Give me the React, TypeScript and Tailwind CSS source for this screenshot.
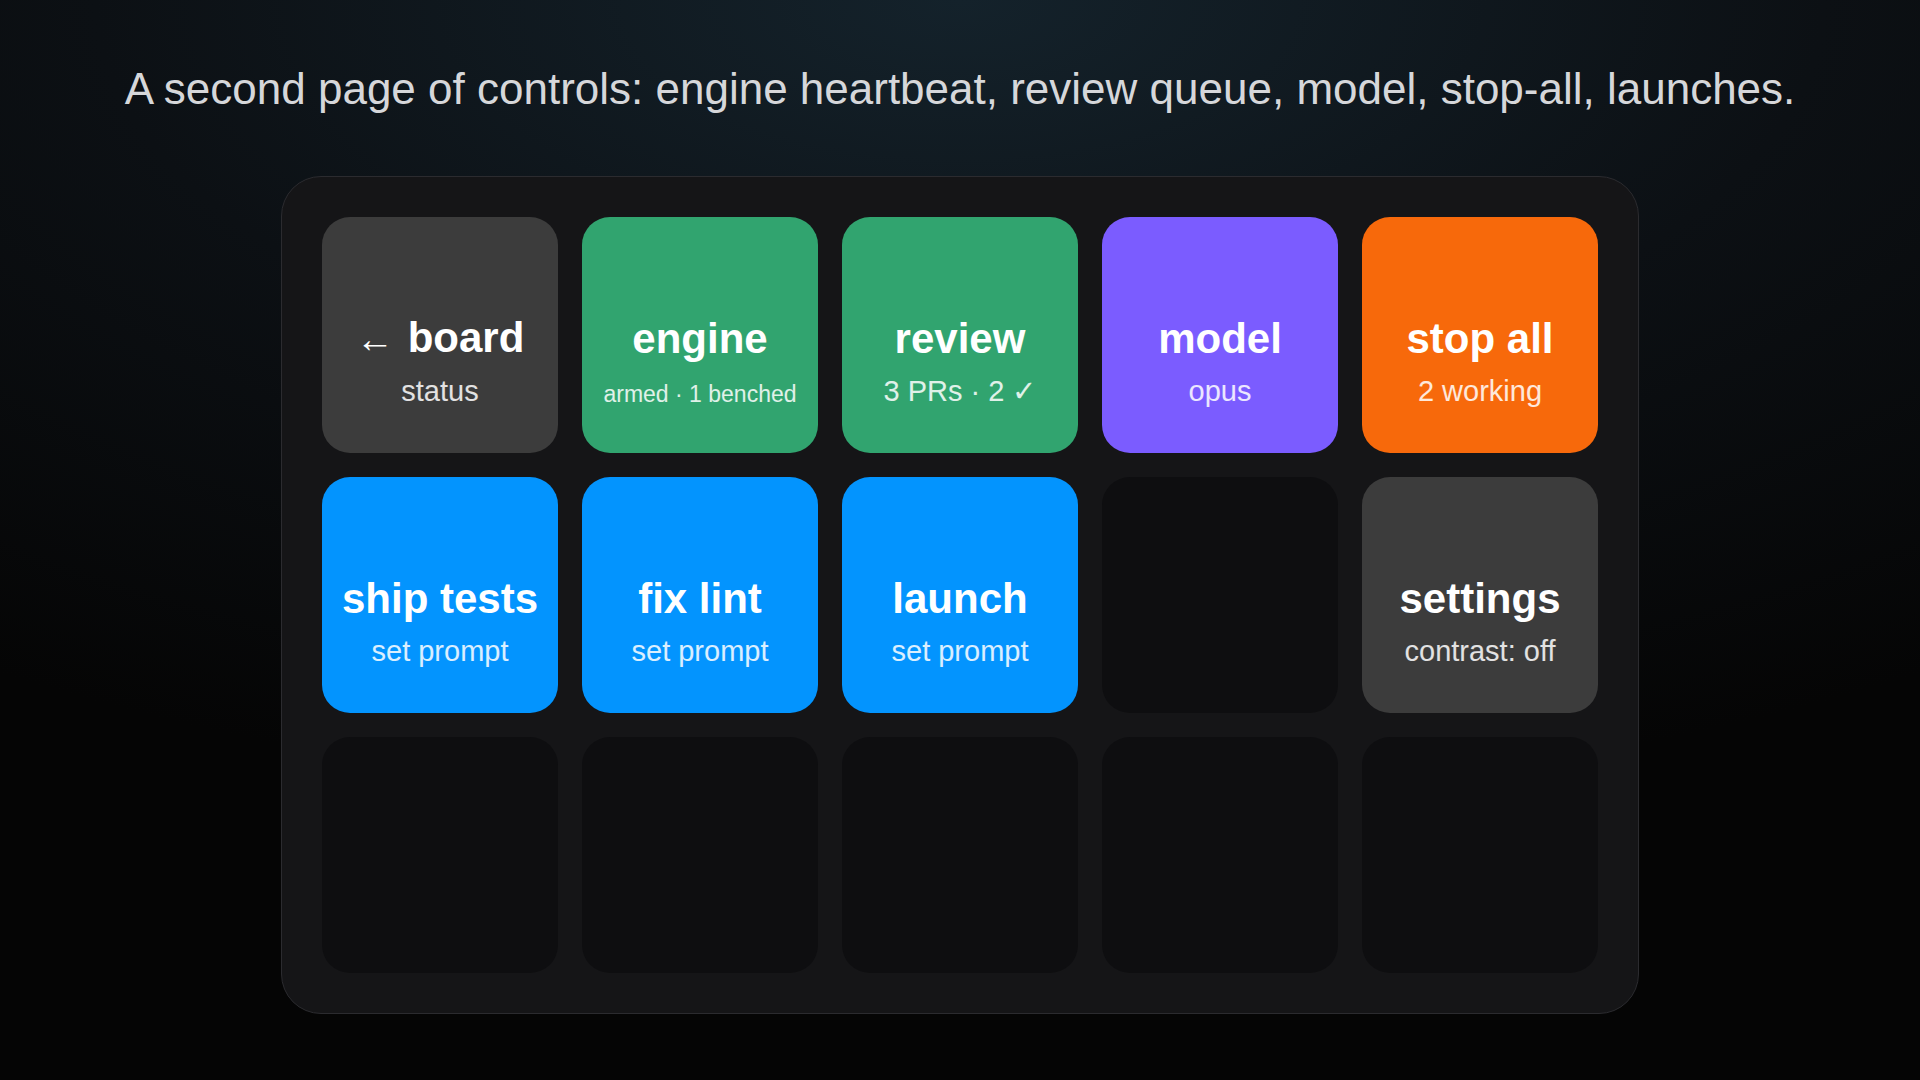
type Tone = 'gray' | 'green' | 'purple' | 'orange' | 'blue' | 'empty';

interface DeckKey {
  title?: string;
  sub?: string;
  tone: Tone;
  back?: boolean;
  small?: boolean;
}

const toneClass: Record<Tone, string> = {
  gray: 'bg-[#3c3c3c] text-white',
  green: 'bg-[#31a46f] text-white',
  purple: 'bg-[#7b5cff] text-white',
  orange: 'bg-[#f7690b] text-white',
  blue: 'bg-[#0394fe] text-white',
  empty: 'bg-[#0e0e10]',
};

const keys: DeckKey[] = [
  { title: 'board', sub: 'status', tone: 'gray', back: true },
  { title: 'engine', sub: 'armed · 1 benched', tone: 'green', small: true },
  { title: 'review', sub: '3 PRs · 2 ✓', tone: 'green' },
  { title: 'model', sub: 'opus', tone: 'purple' },
  { title: 'stop all', sub: '2 working', tone: 'orange' },
  { title: 'ship tests', sub: 'set prompt', tone: 'blue' },
  { title: 'fix lint', sub: 'set prompt', tone: 'blue' },
  { title: 'launch', sub: 'set prompt', tone: 'blue' },
  { tone: 'empty' },
  { title: 'settings', sub: 'contrast: off', tone: 'gray' },
  { tone: 'empty' },
  { tone: 'empty' },
  { tone: 'empty' },
  { tone: 'empty' },
  { tone: 'empty' },
];

function Key({ k }: { k: DeckKey }) {
  return (
    <div
      className={`w-[236px] h-[236px] rounded-[28px] flex flex-col items-center justify-center pt-[52px] ${toneClass[k.tone]}`}
    >
      {k.title && (
        <>
          <div className="text-[42px] leading-[50px] font-bold whitespace-nowrap">
            {k.back && <span className="font-normal text-[38px] mr-[14px]">←</span>}
            {k.title}
          </div>
          {/* smaller caption keeps the same baseline as the regular ones */}
          <div
            className={`whitespace-nowrap text-white/85 ${
              k.small ? 'mt-[13px] mb-[-3px] text-[23px] leading-[35px]' : 'mt-[10px] text-[29px] leading-[35px]'
            }`}
          >
            {k.sub}
          </div>
        </>
      )}
    </div>
  );
}

export default function App() {
  return (
    <div
      className="w-[1920px] h-[1080px] overflow-hidden flex flex-col items-center bg-[radial-gradient(ellipse_90%_75%_at_50%_0%,#14222b_0%,#0c1014_50%,#050505_100%)]"
      style={{ fontFamily: '"Liberation Sans", Arial, sans-serif' }}
    >
      <div className="h-[176px] flex items-center justify-center">
        <h1 className="text-[44px] leading-none text-[#d6d7da] pt-[1px]">
          A second page of controls: engine heartbeat, review queue, model, stop-all, launches.
        </h1>
      </div>

      <div className="p-10 rounded-[40px] border border-[#2b2b2f] bg-[#151517]">
        <div className="grid grid-cols-5 gap-6">
          {keys.map((k, i) => (
            <Key key={i} k={k} />
          ))}
        </div>
      </div>
    </div>
  );
}
